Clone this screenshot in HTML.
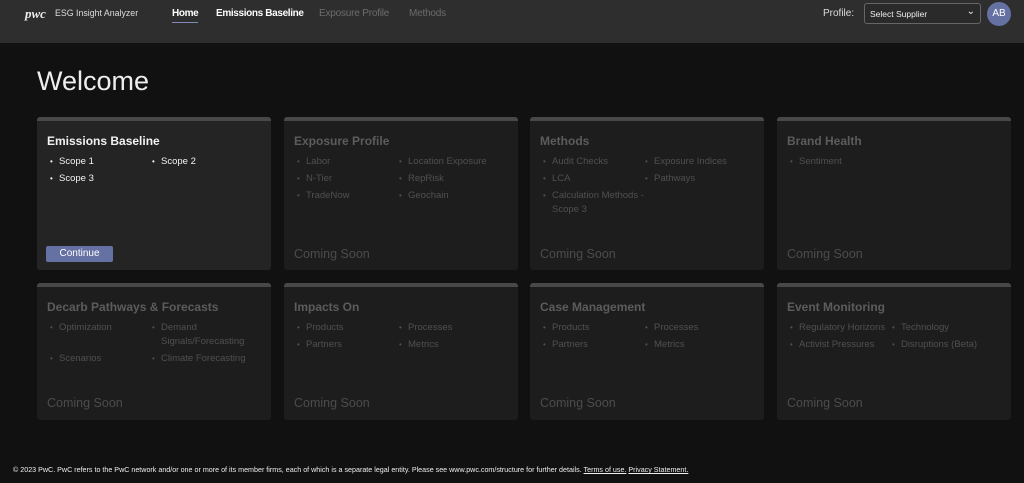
<!DOCTYPE html>
<html><head><meta charset="utf-8"><style>
*{margin:0;padding:0;box-sizing:border-box}
body{width:1024px;height:483px;background:#111;font-family:"Liberation Sans",Arial,sans-serif;position:relative;overflow:hidden;color:#fff}
.hdr{position:absolute;left:0;top:0;width:1024px;height:43px;background:#2e2e2e}
.abs{position:absolute;white-space:nowrap}
.nav{font-size:10px;top:8px;font-weight:bold;letter-spacing:-0.35px}
.card{position:absolute;width:234px;background:#1d1d1d;border-radius:3px;border-top:4px solid #484848}
.card.on{background:#242424}
.t{position:absolute;left:10px;top:13px;font-size:12px;font-weight:bold;color:#5c5c5c}
.on .t{color:#f2f2f2}
.li{position:absolute;font-size:9.5px;color:#505050;line-height:14px}
.on .li{color:#f2f2f2}
.li:before{content:"•";position:absolute;left:-9px;font-size:8px}
.cs{position:absolute;left:10px;font-size:12.5px;color:#4c4c4c}
</style></head><body>
<div class="hdr">
<div class="abs" style="left:25px;top:6px;font-family:'Liberation Serif',serif;font-weight:bold;font-size:13px;font-style:italic;color:#eee">pwc</div>
<div class="abs" style="left:55px;top:8px;font-size:8.8px;color:#ddd">ESG Insight Analyzer</div>
<div class="abs nav" style="left:172px;color:#fff">Home</div>
<div class="abs" style="left:172px;top:22px;width:26px;height:1px;background:#7f8bb8"></div>
<div class="abs nav" style="left:216px;color:#fff">Emissions Baseline</div>
<div class="abs nav" style="left:319px;color:#6c6c6c;font-weight:normal;letter-spacing:-0.2px">Exposure Profile</div>
<div class="abs nav" style="left:409px;color:#6c6c6c;font-weight:normal;letter-spacing:-0.2px">Methods</div>
<div class="abs" style="left:823px;top:8px;font-size:10px;color:#ddd">Profile:</div>
<div class="abs" style="left:864px;top:3px;width:117px;height:21px;border:1px solid #666;border-radius:3px;background:#2a2a2a;font-size:8.5px;color:#eee;padding:5px 0 0 5px">Select Supplier<span style="position:absolute;right:5px;top:2px;font-size:10px">⌄</span></div>
<div class="abs" style="left:987px;top:2px;width:24px;height:24px;border-radius:50%;background:#6571a3;font-size:10px;text-align:center;line-height:24px;color:#fff">AB</div>
</div>
<div class="abs" style="left:37px;top:66px;font-size:27px;color:#eee">Welcome</div>

<div class="card on" style="left:37px;top:117px;height:153px"><div class="t">Emissions Baseline</div>
<div class="li" style="left:22px;top:34px">Scope 1</div><div class="li" style="left:124px;top:34px">Scope 2</div><div class="li" style="left:22px;top:51px">Scope 3</div>
<div class="abs" style="left:9px;top:125px;width:67px;height:16px;background:#6571a3;border-radius:2px;font-size:10px;text-align:center;line-height:16px;color:#fff">Continue</div></div>

<div class="card" style="left:284px;top:117px;height:153px"><div class="t">Exposure Profile</div>
<div class="li" style="left:22px;top:34px">Labor</div><div class="li" style="left:124px;top:34px">Location Exposure</div>
<div class="li" style="left:22px;top:51px">N-Tier</div><div class="li" style="left:124px;top:51px">RepRisk</div>
<div class="li" style="left:22px;top:68px">TradeNow</div><div class="li" style="left:124px;top:68px">Geochain</div>
<div class="cs" style="top:126px">Coming Soon</div></div>

<div class="card" style="left:530px;top:117px;height:153px"><div class="t">Methods</div>
<div class="li" style="left:22px;top:34px">Audit Checks</div><div class="li" style="left:124px;top:34px">Exposure Indices</div>
<div class="li" style="left:22px;top:51px">LCA</div><div class="li" style="left:124px;top:51px">Pathways</div>
<div class="li" style="left:22px;top:68px">Calculation Methods -<br>Scope 3</div>
<div class="cs" style="top:126px">Coming Soon</div></div>

<div class="card" style="left:777px;top:117px;height:153px"><div class="t">Brand Health</div>
<div class="li" style="left:22px;top:34px">Sentiment</div>
<div class="cs" style="top:126px">Coming Soon</div></div>

<div class="card" style="left:37px;top:283px;height:137px"><div class="t">Decarb Pathways &amp; Forecasts</div>
<div class="li" style="left:22px;top:34px">Optimization</div><div class="li" style="left:124px;top:34px">Demand<br>Signals/Forecasting</div>
<div class="li" style="left:22px;top:65px">Scenarios</div><div class="li" style="left:124px;top:65px">Climate Forecasting</div>
<div class="cs" style="top:109px">Coming Soon</div></div>

<div class="card" style="left:284px;top:283px;height:137px"><div class="t">Impacts On</div>
<div class="li" style="left:22px;top:34px">Products</div><div class="li" style="left:124px;top:34px">Processes</div>
<div class="li" style="left:22px;top:51px">Partners</div><div class="li" style="left:124px;top:51px">Metrics</div>
<div class="cs" style="top:109px">Coming Soon</div></div>

<div class="card" style="left:530px;top:283px;height:137px"><div class="t">Case Management</div>
<div class="li" style="left:22px;top:34px">Products</div><div class="li" style="left:124px;top:34px">Processes</div>
<div class="li" style="left:22px;top:51px">Partners</div><div class="li" style="left:124px;top:51px">Metrics</div>
<div class="cs" style="top:109px">Coming Soon</div></div>

<div class="card" style="left:777px;top:283px;height:137px"><div class="t">Event Monitoring</div>
<div class="li" style="left:22px;top:34px">Regulatory Horizons</div><div class="li" style="left:124px;top:34px">Technology</div>
<div class="li" style="left:22px;top:51px">Activist Pressures</div><div class="li" style="left:124px;top:51px">Disruptions (Beta)</div>
<div class="cs" style="top:109px">Coming Soon</div></div>

<div class="abs" style="left:13px;top:466px;font-size:7.15px;color:#eee">© 2023 PwC. PwC refers to the PwC network and/or one or more of its member firms, each of which is a separate legal entity. Please see www.pwc.com/structure for further details. <u>Terms of use.</u> <u>Privacy Statement.</u></div>
</body></html>
